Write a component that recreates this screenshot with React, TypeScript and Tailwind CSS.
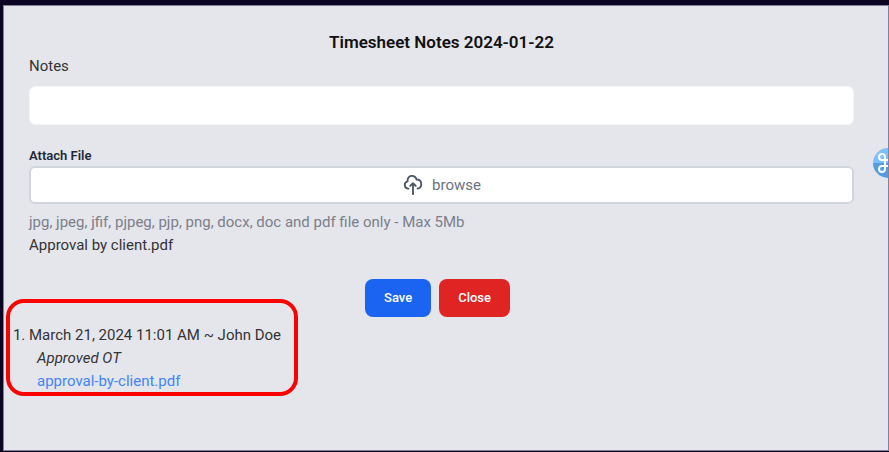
import { Command } from 'lucide-react'

const UploadIcon = () => (
  <svg
    className="h-[22px] w-[22px]"
    fill="none"
    stroke="currentColor"
    strokeWidth="2"
    strokeLinecap="round"
    strokeLinejoin="round"
    viewBox="0 0 24 24"
    aria-hidden="true"
  >
    <path d="M7 16a4 4 0 01-.88-7.903A5 5 0 1115.9 6L16 6a5 5 0 011 9.9M15 13l-3-3m0 0l-3 3m3-3v12" />
  </svg>
)

const notes = [
  {
    title: 'March 21, 2024 11:01 AM ~ John Doe',
    text: 'Approved OT',
    file: 'approval-by-client.pdf',
  },
]

const App = () => {
  return (
    <div className="flex min-h-screen overflow-hidden bg-[#0b0523] pt-[5px] pb-px pl-[3px] font-[Roboto,sans-serif] text-[15px] leading-[23px] text-[#333336]">
      <main className="relative w-full overflow-hidden border border-[#84809a] bg-[#e5e6eb] pt-6 pr-[34px] pb-4 pl-[25px]">
        <form onSubmit={(e) => e.preventDefault()}>
          <h1 className="mb-px text-center text-[17px] leading-6 font-semibold text-[#111111]">
            Timesheet Notes 2024-01-22
          </h1>
          <label htmlFor="notes" className="block">
            Notes
          </label>
          <input
            id="notes"
            type="text"
            className="mt-2 block h-[39px] w-full rounded-md border border-gray-100 bg-white px-3 outline-none"
          />
          <label
            htmlFor="file"
            className="mt-[21px] block text-[13px] leading-5 font-semibold text-gray-800"
          >
            Attach File
          </label>
          <label
            htmlFor="file"
            className="flex h-[38px] w-full cursor-pointer items-center justify-center gap-2 rounded-md border-2 border-gray-300 bg-white text-gray-600"
          >
            <UploadIcon />
            <span className="text-gray-500">browse</span>
            <input id="file" type="file" className="sr-only" />
          </label>
          <p className="mt-[7px] text-[#7b7f8c]">
            jpg, jpeg, jfif, pjpeg, pjp, png, docx, doc and pdf file only - Max
            5Mb
          </p>
          <p>Approval by client.pdf</p>
          <div className="mt-[22px] flex justify-center gap-2 pr-2 text-[13px] leading-[18px] font-medium text-white">
            <button
              type="submit"
              className="rounded-lg bg-[#1b64f2] px-[19px] py-[10px]"
            >
              Save
            </button>
            <button
              type="button"
              className="rounded-lg bg-[#e02424] px-[19px] py-[10px]"
            >
              Close
            </button>
          </div>
        </form>

        <div className="relative mt-[7px] w-fit">
          <ol className="list-decimal">
            {notes.map((note) => (
              <li key={note.title}>
                {note.title}
                <div className="pl-2">
                  <p className="italic">{note.text}</p>
                  <a href="#" className="text-[#4285f8]">
                    {note.file}
                  </a>
                </div>
              </li>
            ))}
          </ol>
          <div className="pointer-events-none absolute -top-[25px] -right-[17px] -bottom-[3px] -left-[23px] rounded-[18px] border-4 border-[#fe0000]" />
        </div>

        <button
          type="button"
          aria-label="Shortcuts"
          className="absolute top-[142px] -right-[15px] flex h-[30px] w-[30px] items-center justify-center rounded-full bg-linear-to-b from-[#7cc0ff] from-50% to-[#529de0] to-50% text-white"
        >
          <Command className="h-6 w-6 shrink-0" strokeWidth={2} />
        </button>
      </main>
    </div>
  )
}

export default App
